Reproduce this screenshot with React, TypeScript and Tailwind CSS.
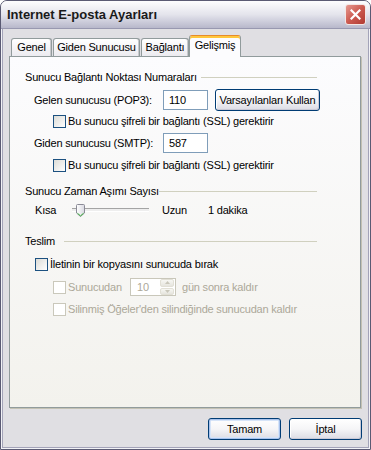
import React from "react";
import clsx from "clsx";

function CheckBox({ disabled }: { disabled?: boolean }) {
  return (
    <span
      className={clsx(
        "block w-[13px] h-[13px] shrink-0 border",
        disabled
          ? "border-[#cac8bb] bg-white"
          : "border-[#1c5180] bg-gradient-to-br from-[#dcdcd7] to-white"
      )}
    />
  );
}

function GroupHeader({ title, labelWidth }: { title: string; labelWidth: string }) {
  return (
    <div className="flex items-center h-[13px] pr-[43px]">
      <span className={clsx("shrink-0 whitespace-nowrap", labelWidth)}>{title}</span>
      <span className="flex-1 h-px bg-[#d0d0bf]" />
    </div>
  );
}

function XpButton({ children, isDefault, className }: { children: React.ReactNode; isDefault?: boolean; className?: string }) {
  return (
    <button
      className={clsx(
        "flex items-center justify-center h-[22px] border border-[#003c74] rounded-[3px] bg-gradient-to-b from-white via-[#f5f5f7] to-[#dcdce4] text-black",
        isDefault
          ? "shadow-[inset_0_0_0_1px_#a8c2ec,inset_0_0_0_2px_#d6e4f8]"
          : "shadow-[inset_-1px_-1px_0_#c9c9d6,inset_1px_1px_0_#ffffff]",
        className
      )}
    >
      {children}
    </button>
  );
}

function TextBox({ value }: { value: string }) {
  return (
    <div className="w-[45px] h-[20px] border border-[#7f9db9] bg-white flex items-center pl-[5px]">
      {value}
    </div>
  );
}

const tabs = [
  { label: "Genel", w: "w-[41px]", ml: "ml-[2px]" },
  { label: "Giden Sunucusu", w: "w-[87px]", ml: "ml-[1px]" },
  { label: "Bağlantı", w: "w-[48px]", ml: "ml-[1px]" },
];

export default function App() {
  return (
    <div className="w-[371px] h-[450px] flex flex-col bg-[#e0dfe3] border border-[#5a5a73] rounded-t-[7px] overflow-hidden font-['Liberation_Sans',Arial,sans-serif] text-[11px] tracking-[-0.2px] text-black leading-[13px]">
      {/* title bar */}
      <div className="h-[28px] shrink-0 flex items-center justify-between pl-[6px] pr-[4px] bg-gradient-to-b from-[#fdfdfe] via-[#e4e4ec] to-[#b8b8cb] border-b border-[#9898b0]">
        <span className="font-bold text-[13px] tracking-normal text-[#1a1a1a]">Internet E-posta Ayarları</span>
        <div className="w-[21px] h-[21px] rounded-[3px] border border-[#f3e6e4] bg-gradient-to-br from-[#e59890] via-[#cc5a50] to-[#b03a32] flex items-center justify-center">
          <svg width="11" height="11" viewBox="0 0 11 11">
            <path d="M1.5 1.5 L9.5 9.5 M9.5 1.5 L1.5 9.5" stroke="white" strokeWidth="2.2" strokeLinecap="square" />
          </svg>
        </div>
      </div>

      {/* client area */}
      <div className="flex-1 flex flex-col border-x border-b border-[#f2f2f6] shadow-[inset_1px_0_#a3a3b8,inset_-1px_0_#a3a3b8,inset_0_-1px_#a3a3b8] pl-[7px] pt-[6px]">
        {/* tabs */}
        <div className="flex items-end h-[21px]">
          {tabs.map((t) => (
            <div
              key={t.label}
              className={clsx(
                "h-[18px] flex items-center justify-center border border-b-0 border-[#919b9c] rounded-t-[3px] bg-gradient-to-b from-white to-[#ecebf0] shadow-[inset_-1px_0_#c8c8cc]",
                t.w,
                t.ml
              )}
            >
              {t.label}
            </div>
          ))}
          <div className="relative z-10 w-[52px] h-[22px] mb-[-1px] flex items-center justify-center pb-[2px] border-x border-[#919b9c] border-t border-t-[#e68b2c] rounded-t-[3px] bg-[#fcfcfe] shadow-[inset_0_2px_#ffc73c]">
            Gelişmiş
          </div>
        </div>

        {/* panel */}
        <div className="w-[352px] h-[352px] flex flex-col border border-[#919b9c] bg-gradient-to-b from-[#fcfcfe] to-[#f3f2ed] shadow-[1px_1px_0_#c3c1b3] pl-[15px] pt-[14px]">
          <GroupHeader title="Sunucu Bağlantı Noktası Numaraları" labelWidth="w-[176px]" />

          <div className="flex items-center h-[22px] mt-[5px] pl-[9px]">
            <span className="w-[129px]">Gelen sunucusu (POP3):</span>
            <TextBox value="110" />
            <XpButton className="ml-[7px] w-[105px]">Varsayılanları Kullan</XpButton>
          </div>

          <div className="flex items-center h-[13px] mt-[4px] pl-[28px]">
            <CheckBox />
            <span className="ml-[2px]">Bu sunucu şifreli bir bağlantı (SSL) gerektirir</span>
          </div>

          <div className="flex items-center h-[20px] mt-[5px] pl-[9px]">
            <span className="w-[129px]">Giden sunucusu (SMTP):</span>
            <TextBox value="587" />
          </div>

          <div className="flex items-center h-[13px] mt-[6px] pl-[28px]">
            <CheckBox />
            <span className="ml-[2px]">Bu sunucu şifreli bir bağlantı (SSL) gerektirir</span>
          </div>

          <div className="mt-[13px]">
            <GroupHeader title="Sunucu Zaman Aşımı Sayısı" labelWidth="w-[134px]" />
          </div>

          <div className="flex items-center h-[20px] mt-[2px] pl-[10px]">
            <span className="w-[37px]">Kısa</span>
            <div className="relative w-[77px] h-[20px]">
              <div className="absolute left-0 right-0 top-[8px] h-[3px] border-t border-[#a4a4a4] bg-[#eeeeee] shadow-[0_1px_0_#ffffff]" />
              <svg className="absolute left-[4px] top-[4px]" width="9" height="13" viewBox="0 0 9 13">
                <defs>
                  <linearGradient id="th" x1="0" y1="0" x2="1" y2="0">
                    <stop offset="0" stopColor="#ffffff" />
                    <stop offset="1" stopColor="#d8d8e0" />
                  </linearGradient>
                </defs>
                <path d="M1.5 0.5 H7.5 Q8.5 0.5 8.5 1.5 V9 L4.5 12.5 L0.5 9 V1.5 Q0.5 0.5 1.5 0.5 Z" fill="url(#th)" stroke="#8a8a96" />
                <path d="M1.5 9.3 L4.5 11.8 L7.5 9.3" fill="none" stroke="#3cb43c" />
              </svg>
            </div>
            <span className="ml-[13px] w-[46px]">Uzun</span>
            <span>1 dakika</span>
          </div>

          <div className="mt-[15px]">
            <GroupHeader title="Teslim" labelWidth="w-[39px]" />
          </div>

          <div className="flex items-center h-[13px] mt-[10px] pl-[10px]">
            <CheckBox />
            <span className="ml-[2px]">İletinin bir kopyasını sunucuda bırak</span>
          </div>

          <div className="flex items-center h-[18px] mt-[7px] pl-[28px] text-[#aca899]">
            <CheckBox disabled />
            <span className="ml-[2px] w-[62px]">Sunucudan</span>
            <div className="w-[46px] h-[18px] border border-[#c9c7ba] bg-white flex items-center">
              <span className="flex-1 pl-[6px]">10</span>
              <div className="w-[14px] h-[16px] mr-[1px] flex flex-col gap-px">
                <div className="flex-1 rounded-[2px] bg-gradient-to-b from-[#f7f7f3] to-[#e6e5de] border border-[#e2e0d6] flex items-center justify-center">
                  <svg width="5" height="3" viewBox="0 0 5 3"><path d="M0 3 L2.5 0 L5 3 Z" fill="#c9c7ba" /></svg>
                </div>
                <div className="flex-1 rounded-[2px] bg-gradient-to-b from-[#f7f7f3] to-[#e6e5de] border border-[#e2e0d6] flex items-center justify-center">
                  <svg width="5" height="3" viewBox="0 0 5 3"><path d="M0 0 L2.5 3 L5 0 Z" fill="#c9c7ba" /></svg>
                </div>
              </div>
            </div>
            <span className="ml-[6px]">gün sonra kaldır</span>
          </div>

          <div className="flex items-center h-[13px] mt-[7px] pl-[28px] text-[#aca899]">
            <CheckBox disabled />
            <span className="ml-[2px]">Silinmiş Öğeler'den silindiğinde sunucudan kaldır</span>
          </div>
        </div>

        {/* buttons */}
        <div className="flex justify-end gap-[8px] mt-[10px] pr-[7px]">
          <XpButton isDefault className="w-[73px]">Tamam</XpButton>
          <XpButton className="w-[73px]">İptal</XpButton>
        </div>
      </div>
    </div>
  );
}
